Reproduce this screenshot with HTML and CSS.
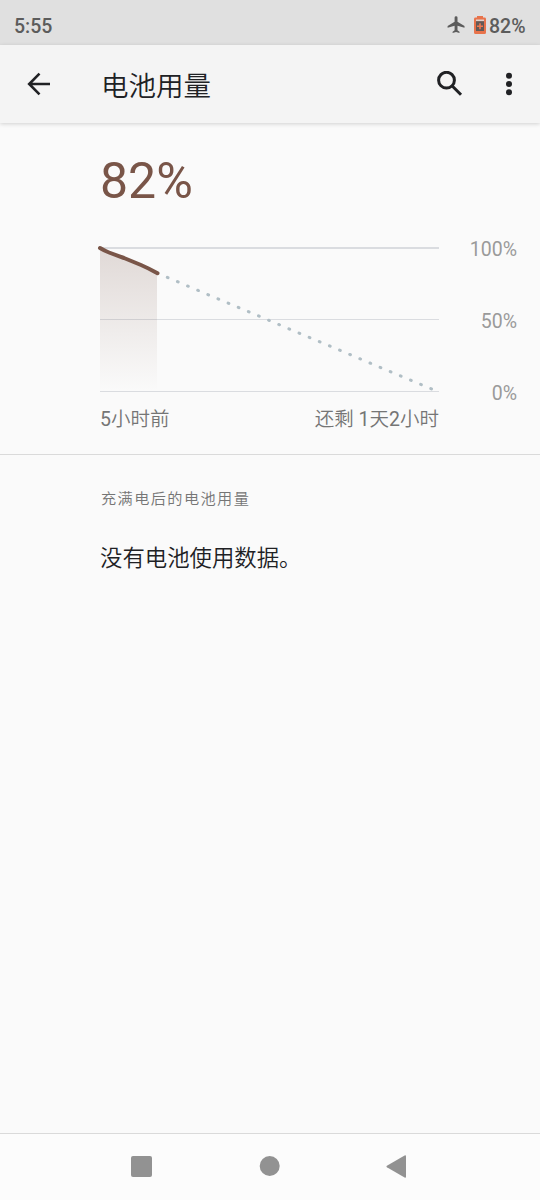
FILE: index.html
```html
<!DOCTYPE html>
<html lang="zh-CN">
<head>
<meta charset="utf-8">
<title>电池用量</title>
<link rel="stylesheet" href="styles.css">
</head>
<body>
<div class="screen">
  <div class="status">
    <span class="clock">5:55</span>
    <div class="status-right">
      <svg class="plane" width="18" height="18" viewBox="0 0 18 18"><path d="M17.500 11.800V9.900L10.500 5.800V1.600a1.450 1.450 0 0 0-2.900 0v4.200L.6 9.900v1.900l7-2.100v4.500l-2 1.500v1.400l3.450-1 3.450 1v-1.400l-2-1.500V9.700z"/></svg>
      <svg class="battery" width="12" height="18" viewBox="0 0 12 18"><path fill="#e8734b" d="M3 0h6v1.6h1.5Q12 1.600 12 3v13.500Q12 18 10.500 18h-9Q0 18 0 16.500V3Q0 1.600 1.500 1.600H3z"/><path fill="#e0d2cc" d="M2 3.500h8v2H2z"/><path fill="#625a57" d="M2 5.200h8V15H2z"/><path fill="#f07850" d="M5.200 7.300h1.600v2.200H9V11H6.800v2.200H5.200V11H3V9.500h2.200z"/></svg>
      <span class="level">82%</span>
    </div>
  </div>
  <header class="toolbar">
    <svg class="back" width="24" height="24" viewBox="0 0 24 24"><path d="M23 12H2.500M12.500 1.700 2.200 12l10.300 10.300"/></svg>
    <h1>电池用量</h1>
    <svg class="search" width="26" height="26" viewBox="0 0 26 26"><circle cx="9.500" cy="9.200" r="7.900"/><path d="m15 14.700 9 9"/></svg>
    <svg class="more" width="6" height="24" viewBox="0 0 6 24"><circle cx="3" cy="3.700" r="3"/><circle cx="3" cy="12" r="3"/><circle cx="3" cy="20.300" r="3"/></svg>
  </header>
  <main>
    <section class="usage">
      <div class="percent">82%</div>
      <div class="graph">
        <svg class="plot" width="345" height="150" viewBox="-4 -3 345 150">
          <defs><linearGradient id="fade" x1="0" y1="0" x2="0" y2="1"><stop offset="0" stop-color="#795548" stop-opacity=".2"/><stop offset="1" stop-color="#795548" stop-opacity="0"/></linearGradient></defs>
          <path class="grid" d="M0 0h339v2H0zM0 72h339v1H0zM0 144h339v1H0z"/>
          <path fill="url(#fade)" d="M0 1 9 5.500 24 11l17 7 16 8v118H0z"/>
          <path class="forecast" d="M67.300 30.400 332 142.200"/>
          <path class="history" d="M0 1Q5 4 9 5.500L24 11l17 7q8 3.500 16.500 8.200"/>
        </svg>
        <div class="scale"><span>100%</span><span>50%</span><span>0%</span></div>
      </div>
      <div class="times"><span>5<span class="han">小时前</span></span><span><span class="han">还剩</span> 1<span class="han">天</span>2<span class="han">小时</span></span></div>
    </section>
    <section class="details">
      <h2>充满电后的电池用量</h2>
      <p>没有电池使用数据。</p>
    </section>
  </main>
  <nav class="nav">
    <svg width="21" height="21" viewBox="0 0 21 21"><rect width="21" height="21" rx="2"/></svg>
    <svg width="21" height="20" viewBox="0 0 21 20"><circle cx="10.700" cy="10" r="10"/></svg>
    <svg width="20" height="23" viewBox="0 0 20 23"><path d="M.9 10.700 18.600.4q1.400-.5 1.400.8v20.600q0 1.300-1.400.8L.9 12.300q-.9-.8 0-1.600z"/></svg>
  </nav>
</div>
</body>
</html>
```
FILE: styles.css
```css
* { box-sizing: border-box; }
body { margin: 0; font-family: Roboto, "Noto Sans CJK SC", sans-serif; background: #fafafa; }
h1, h2, p { margin: 0; }
h1, h2, p, .han { font-family: "Noto Sans CJK SC DemiLight", "Noto Sans CJK SC", sans-serif; font-weight: 350; }
svg { display: block; flex: none; }
.screen { width: 540px; height: 1200px; display: flex; flex-direction: column; background: #fafafa; }
.status { height: 45px; flex: none; padding: 7px 15px 0 14px; display: flex; justify-content: space-between; align-items: center; background: #e0e0e0; color: #5c5c5c; font-size: 19.5px; font-weight: 500; }
.status-right { display: flex; align-items: center; }
.plane { fill: #5c5c5c; margin-right: 9px; margin-top: -2px; }
.battery { margin-right: 3px; margin-top: -2px; }
.level { margin-right: -.5px; }
.toolbar { height: 78px; flex: none; display: flex; align-items: center; padding: 0 28px 0 27px; background: #f4f4f4; box-shadow: 0 1px 4px rgba(0,0,0,.17); color: #202124; }
.back, .search { fill: none; stroke: #202124; stroke-width: 2.6; }
.search { stroke-width: 3; }
.toolbar h1 { margin: 0 0 1px 50px; font-size: 27.5px; line-height: 40px; flex: 1; }
.more { margin-left: 43px; fill: #202124; }
main { flex: 1; }
.usage { height: 332px; padding: 28px 23px 0 96px; border-bottom: 1px solid #dadada; }
.percent { padding-left: 4px; height: 60px; line-height: 60px; font-size: 50px; color: #795548; }
.graph { display: flex; justify-content: space-between; margin-top: 33px; }
.grid { fill: #dadce0; }
.history { fill: none; stroke: #795548; stroke-width: 4; stroke-linecap: round; stroke-linejoin: round; }
.forecast { fill: none; stroke: #b0bec5; stroke-width: 3; stroke-linecap: round; stroke-dasharray: .8 10.2; }
.scale { height: 168px; margin: -6px 0 -20px; display: flex; flex-direction: column; justify-content: space-between; align-items: flex-end; font-size: 19.5px; line-height: 24px; color: #9a9a9a; }
.times { display: flex; justify-content: space-between; height: 30px; padding: 0 78px 0 4px; margin-top: 11px; font-size: 19.5px; line-height: 30px; color: #757575; }
.han { line-height: 1; }
.details { padding: 30px 100px 0 100px; }
.details h2 { padding-left: 1px; font-size: 15.2px; line-height: 24px; letter-spacing: 1.4px; color: #757575; }
.details p { margin-top: 31px; font-size: 22.4px; line-height: 32px; color: #202124; }
.nav { height: 67px; flex: none; display: flex; align-items: center; padding: 0 134px 2px 131px; justify-content: space-between; background: #fcfcfc; border-top: 1px solid #dadada; fill: #929292; }
```
